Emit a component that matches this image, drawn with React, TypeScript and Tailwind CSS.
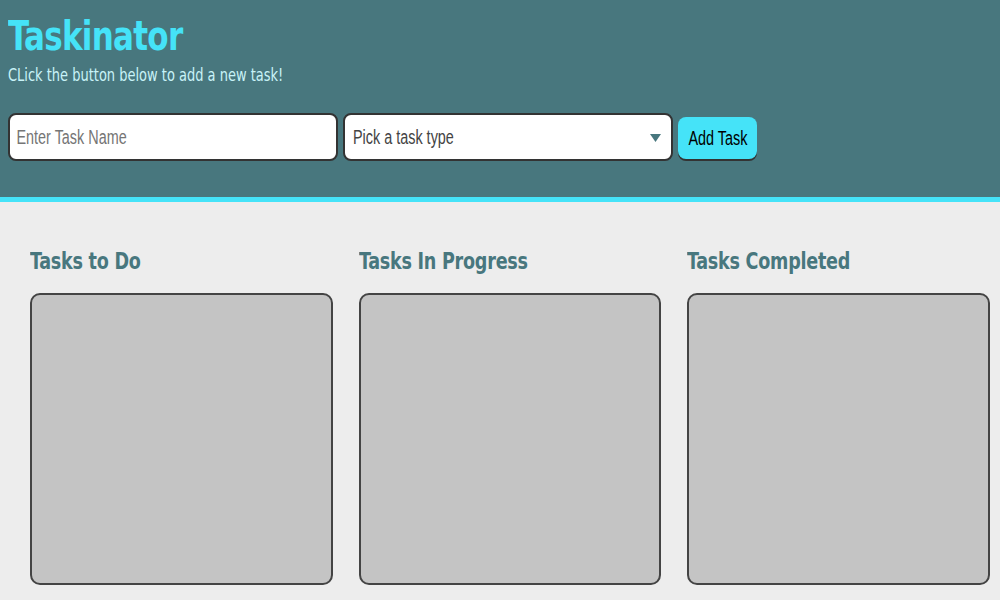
const COLUMNS = ["Tasks to Do", "Tasks In Progress", "Tasks Completed"];

export default function App() {
  return (
    <div className="min-h-[600px] bg-[#ededed] font-['DejaVu_Sans_Condensed','DejaVu_Sans',sans-serif]">
      <header className="h-[202px] bg-[#48777e] border-b-[5px] border-[#45e3f8] px-2 pt-[12px]">
        <h1 className="origin-left scale-x-[0.86] text-[40px] leading-[48px] font-bold text-[#45e3f8] tracking-[-0.8px]">
          Taskinator
        </h1>
        <p className="origin-left scale-x-[0.85] text-[17px] leading-[22px] text-[#c8f3f8] mt-[4px]">
          CLick the button below to add a new task!
        </p>
        <form className="flex items-start gap-[5px] mt-[27px] font-['Liberation_Sans',Arial,sans-serif]">
          <div className="w-[330px] h-[48px] rounded-[8px] border-2 border-[#333] bg-white overflow-hidden">
            <input
              type="text"
              placeholder="Enter Task Name"
              className="origin-left scale-x-[0.72] w-[440px] h-full bg-transparent px-[9px] text-[20px] text-[#333] placeholder:text-[#757575] outline-none"
            />
          </div>
          <div className="relative w-[330px] h-[48px] rounded-[8px] border-2 border-[#333] bg-white flex items-center px-[8px]">
            <span className="origin-left scale-x-[0.72] text-[20px] text-[#444] whitespace-nowrap">Pick a task type</span>
            <svg className="absolute right-[10px] top-[19px]" width="11" height="8" viewBox="0 0 11 8">
              <path d="M0 0 H11 L5.5 8 Z" fill="#48777e" />
            </svg>
          </div>
          <button
            type="button"
            className="mt-[4px] w-[79px] h-[42px] flex items-center justify-center rounded-[8px] bg-[#45e3f8] text-[20px] text-black shadow-[0_2px_0_#333]"
          >
            <span className="inline-block scale-x-[0.72] whitespace-nowrap">Add Task</span>
          </button>
        </form>
      </header>
      <main className="grid grid-cols-3 gap-[26px] pl-[30px] pr-[10px] pt-[45px]">
        {COLUMNS.map((title) => (
          <section key={title}>
            <h2 className="origin-left scale-x-[0.85] text-[23px] leading-[28px] font-bold text-[#48777e] tracking-[-0.3px] whitespace-nowrap">
              {title}
            </h2>
            <div className="mt-[18px] h-[292px] rounded-[10px] border-2 border-[#444] bg-[#c4c4c4]" />
          </section>
        ))}
      </main>
    </div>
  );
}
